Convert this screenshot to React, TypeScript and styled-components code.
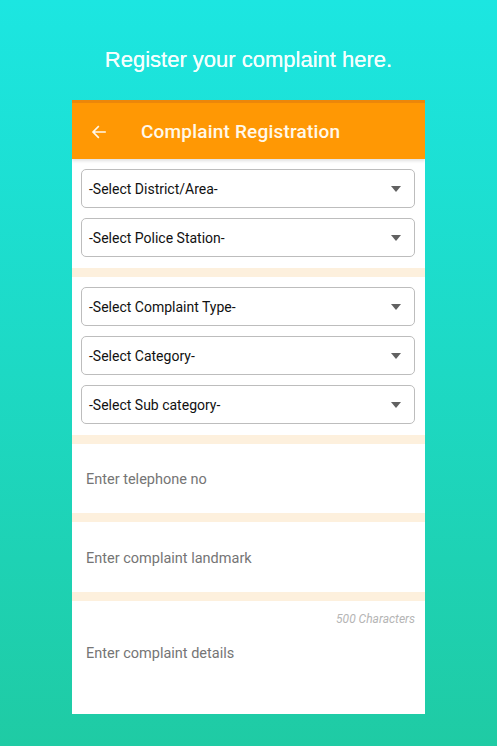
import React from "react";
import styled, { createGlobalStyle } from "styled-components";

const Global = createGlobalStyle`
  html, body { margin: 0; padding: 0; }
  body {
    width: 497px;
    height: 746px;
    overflow: hidden;
    background: linear-gradient(180deg, #1ce6e1 0%, #1dd9c4 50%, #1fcba4 100%);
    font-family: Roboto, "Noto Sans", sans-serif;
  }
`;

const Page = styled.div`
  width: 497px;
  height: 746px;
  display: flex;
  flex-direction: column;
  align-items: center;
  box-sizing: border-box;
  padding-top: 46px;
`;

const Heading = styled.h1`
  margin: 0;
  font-family: "Liberation Sans", Arial, sans-serif;
  font-weight: 400;
  font-size: 22px;
  line-height: 28px;
  color: #f4fffe;
  text-shadow: 0 0 0.4px #f4fffe;
`;

const Card = styled.div`
  margin-top: 26px;
  width: 353px;
  height: 614px;
  background: #ffffff;
  display: flex;
  flex-direction: column;
  overflow: hidden;
`;

const Header = styled.div`
  height: 55px;
  background: #ff9804;
  border-top: 3px solid #ec870a;
  display: flex;
  align-items: center;
  padding: 1px 0 0 18px;
  box-sizing: content-box;
  gap: 33px;
  box-shadow: 0 2px 3px rgba(0, 0, 0, 0.12);
  position: relative;
  z-index: 1;
`;

const Title = styled.div`
  color: #fff8ea;
  font-size: 19px;
  font-weight: 500;
  letter-spacing: 0.2px;
`;

const Section = styled.div`
  display: flex;
  flex-direction: column;
  gap: 10px;
  padding: 10px 10px 11px 9px;
  background: #ffffff;
`;

const Band = styled.div`
  height: 9px;
  background: #fdf0dd;
  flex-shrink: 0;
`;

const Select = styled.div`
  height: 39px;
  box-sizing: border-box;
  border: 1px solid #bdbdbd;
  border-radius: 5px;
  display: flex;
  align-items: center;
  justify-content: space-between;
  padding: 0 13px 0 7px;
  font-size: 14px;
  color: #111;
`;

const Caret = styled.span`
  width: 0;
  height: 0;
  border-left: 5.5px solid transparent;
  border-right: 5.5px solid transparent;
  border-top: 6px solid #616161;
`;

const Field = styled.div<{ $h: number }>`
  height: ${(p) => p.$h}px;
  display: flex;
  align-items: center;
  padding: 2px 0 0 14px;
  box-sizing: border-box;
  font-size: 14.5px;
  color: #757575;
  flex-shrink: 0;
`;

const Details = styled.div`
  flex: 1;
  display: flex;
  flex-direction: column;
  padding: 11px 10px 0 14px;
`;

const Counter = styled.div`
  align-self: flex-end;
  font-size: 12px;
  font-style: italic;
  color: #b5b5b5;
`;

const DetailsText = styled.div`
  margin-top: 19px;
  font-size: 14.5px;
  color: #757575;
`;

const BackArrow = () => (
  <svg width="18" height="18" viewBox="0 0 24 24" fill="none">
    <path
      d="M20 12H4.5M11 5l-7 7 7 7"
      stroke="#fff8ea"
      strokeWidth="2.2"
      strokeLinecap="square"
    />
  </svg>
);

const SelectBox = ({ label }: { label: string }) => (
  <Select>
    <span>{label}</span>
    <Caret />
  </Select>
);

export default function App() {
  return (
    <>
      <Global />
      <Page>
        <Heading>Register your complaint here.</Heading>
        <Card>
          <Header>
            <BackArrow />
            <Title>Complaint Registration</Title>
          </Header>
          <Section>
            <SelectBox label="-Select District/Area-" />
            <SelectBox label="-Select Police Station-" />
          </Section>
          <Band />
          <Section>
            <SelectBox label="-Select Complaint Type-" />
            <SelectBox label="-Select Category-" />
            <SelectBox label="-Select Sub category-" />
          </Section>
          <Band />
          <Field $h={69}>Enter telephone no</Field>
          <Band />
          <Field $h={70}>Enter complaint landmark</Field>
          <Band />
          <Details>
            <Counter>500 Characters</Counter>
            <DetailsText>Enter complaint details</DetailsText>
          </Details>
        </Card>
      </Page>
    </>
  );
}
